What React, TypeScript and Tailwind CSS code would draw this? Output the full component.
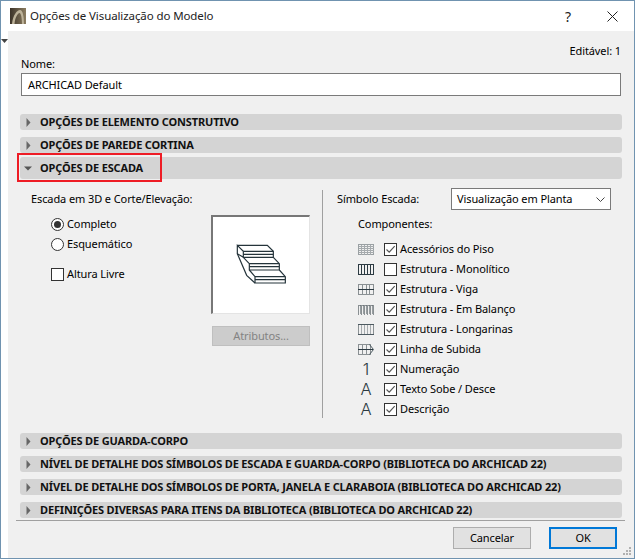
import type { ReactNode } from "react";

const font = "[font-family:'Noto_Sans',sans-serif]";

function Caret({ open = false }: { open?: boolean }) {
  return (
    <span className="flex w-[20px] shrink-0 items-center justify-center pr-[4px]">
      {open ? (
        <svg width="8" height="5" viewBox="0 0 8 5">
          <path d="M0 0.5h8L4 4.5z" fill="#555" />
        </svg>
      ) : (
        <svg width="5" height="9" viewBox="0 0 5 9">
          <path d="M0.5 0v9L4.5 4.5z" fill="#666" />
        </svg>
      )}
    </span>
  );
}

function SectionBar({ label, open = false, className = "" }: { label: string; open?: boolean; className?: string }) {
  return (
    <div
      className={`flex items-center rounded-[3px] bg-[#d4d4d4] text-[11px] leading-none font-bold tracking-[-0.16px] text-[#111] ${
        open ? "h-[22px]" : "h-[16px]"
      } ${className}`}
    >
      <Caret open={open} />
      <span className="-mt-[1px]">{label}</span>
    </div>
  );
}

function Check({ checked = false }: { checked?: boolean }) {
  return (
    <span className="flex h-[13px] w-[13px] shrink-0 items-center justify-center border border-[#333] bg-white">
      {checked && (
        <svg width="11" height="11" viewBox="0 0 11 11">
          <path d="M1.5 5.5L4.2 8.2L9.7 2.2" fill="none" stroke="#555" strokeWidth="1.2" />
        </svg>
      )}
    </span>
  );
}

function Radio({ checked = false }: { checked?: boolean }) {
  return (
    <span className="flex h-[13px] w-[13px] shrink-0 items-center justify-center rounded-full border border-[#333] bg-white">
      {checked && <span className="h-[7px] w-[7px] rounded-full bg-[#333]" />}
    </span>
  );
}

const gray = "#8a9093";
const dark = "#2c3a42";

function Grid({ color, cols, rows = [] as number[] }: { color: string; cols: number[]; rows?: number[] }) {
  return (
    <>
      {cols.map((x) => (
        <path key={`c${x}`} d={`M${x} 0.5V10.5`} stroke={color} />
      ))}
      {rows.map((y) => (
        <path key={`r${y}`} d={`M1 ${y}H16`} stroke={color} />
      ))}
    </>
  );
}

// the numbering and text rows show a sample character as their icon
function GlyphIcon({ char }: { char: string }) {
  return (
    <svg width="16" height="16" viewBox="0 0 16 16" overflow="visible">
      <text x="8" y="14" textAnchor="middle" fontSize="16.5" fontWeight="300" fontFamily="Inter, sans-serif" fill={dark}>
        {char}
      </text>
    </svg>
  );
}

const icons: Record<string, ReactNode> = {
  piso: (
    <svg width="16" height="11" viewBox="0 0 16 11" fill="none" shapeRendering="crispEdges">
      <rect x="0.5" y="0.5" width="15" height="10" stroke="#9aa0a3" />
      <Grid color="#a5aaad" cols={[3.5, 6.5, 9.5, 12.5]} rows={[2.5, 4.5, 6.5, 8.5]} />
    </svg>
  ),
  mono: (
    <svg width="16" height="11" viewBox="0 0 16 11" fill="none" shapeRendering="crispEdges">
      <rect x="0.5" y="0.5" width="15" height="10" stroke={dark} />
      <Grid color={dark} cols={[3.5, 6.5, 9.5, 12.5]} />
    </svg>
  ),
  viga: (
    <svg width="16" height="11" viewBox="0 0 16 11" fill="none" shapeRendering="crispEdges">
      <rect x="0.5" y="0.5" width="15" height="10" stroke={gray} />
      <Grid color={gray} cols={[4.5, 8.5, 11.5]} />
      <path d="M0 5.5H16" stroke={dark} />
    </svg>
  ),
  balanco: (
    <svg width="16" height="11" viewBox="0 0 16 11" fill="none" shapeRendering="crispEdges">
      <path d="M1 1.5H15" stroke={gray} />
      <Grid color={gray} cols={[0.5, 3.5, 6.5, 9.5, 12.5, 15.5]} />
      <path d="M2.5 1V10M5.5 1V10M8.5 1V10M11.5 1V10M14.5 1V10" stroke="#5d676c" strokeWidth="0.6" />
    </svg>
  ),
  longarinas: (
    <svg width="16" height="11" viewBox="0 0 16 11" fill="none" shapeRendering="crispEdges">
      <rect x="0.5" y="0.5" width="15" height="10" stroke={gray} />
      <Grid color="#a5aaad" cols={[3.5, 6.5, 9.5, 12.5]} />
      <path d="M0 0.5H16M0 10.5H16" stroke="#4d5a61" />
    </svg>
  ),
  linha: (
    <svg width="16" height="11" viewBox="0 0 16 11" fill="none">
      <rect x="0.5" y="0.5" width="12" height="10" stroke={gray} shapeRendering="crispEdges" />
      <path d="M4.5 0.5V10.5M8.5 0.5V10.5" stroke={gray} shapeRendering="crispEdges" />
      <path d="M0 5.5H15" stroke={dark} shapeRendering="crispEdges" />
      <path d="M11.5 0.5L15.5 5.5L11.5 10.5" stroke="#4d5a61" />
    </svg>
  ),
  one: <GlyphIcon char="1" />,
  a: <GlyphIcon char="A" />,
};

const components = [
  { label: "Acessórios do Piso", checked: true, icon: icons.piso },
  { label: "Estrutura - Monolítico", checked: false, icon: icons.mono },
  { label: "Estrutura - Viga", checked: true, icon: icons.viga },
  { label: "Estrutura - Em Balanço", checked: true, icon: icons.balanco },
  { label: "Estrutura - Longarinas", checked: true, icon: icons.longarinas },
  { label: "Linha de Subida", checked: true, icon: icons.linha },
  { label: "Numeração", checked: true, icon: icons.one },
  { label: "Texto Sobe / Desce", checked: true, icon: icons.a },
  { label: "Descrição", checked: true, icon: icons.a },
];

function StairPreview() {
  // coordinates are 3x, traced from the dialog's preview
  return (
    <svg width="96" height="96" viewBox="9 15 288 288" fill="none" stroke="#25343b" strokeWidth="3.6">
      <path d="M82 100H172L190 118V136H100V118L82 100V125L100 136" />
      <path d="M100 118H190M100 127H190" />
      <path d="M190 136L208 155V174H118V155L100 136M118 155H208M118 164H208" />
      <path d="M208 174L226 194V213H135V194L118 174M135 194H226M135 203H226" />
      <path d="M82 125L110 190L135 213" />
    </svg>
  );
}

export default function App() {
  return (
    <div className={`relative flex h-[559px] w-[635px] flex-col overflow-hidden border border-[#7093b0] bg-white text-[11px] tracking-[-0.1px] text-black ${font}`}>
      {/* title bar */}
      <div className="flex h-[30px] shrink-0 items-center pl-[9px]">
        <svg width="16" height="16" viewBox="0 0 16 16">
          <defs>
            <linearGradient id="lg" x1="0" y1="0" x2="1" y2="0">
              <stop offset="0" stopColor="#3c3328" />
              <stop offset="1" stopColor="#8b7c60" />
            </linearGradient>
          </defs>
          <rect width="16" height="16" fill="url(#lg)" />
          <path d="M2 16C3 7 7 2 10 2C13 2 14 9 14 16H12C12 10 11 5 9.5 5C8 5 5 9 4.5 16z" fill="#bdb299" />
        </svg>
        <span className="ml-[4px] text-[11.5px] text-[#222]">Opções de Visualização do Modelo</span>
        <span className="ml-auto text-[14px] text-[#222]">?</span>
        <svg className="mr-[16px] ml-[36px]" width="11" height="11" viewBox="0 0 11 11">
          <path d="M0.5 0.5L10.5 10.5M10.5 0.5L0.5 10.5" stroke="#222" />
        </svg>
      </div>

      <div className="flex min-h-0 flex-1">
        {/* collapse strip */}
        <div className="w-[7px] shrink-0 pt-[8px]">
          <svg width="7" height="4" viewBox="0 0 7 4">
            <path d="M0 0H7L3.5 4z" fill="#444" />
          </svg>
        </div>

        <div className="flex min-w-0 flex-1 flex-col bg-[#f0f0f0] px-[12px]">
          <div className="mt-[12px] mb-[1px] flex h-[14px] items-center justify-end pr-[1px] leading-none">Editável: 1</div>
          <div className="h-[11px] pl-[1px] leading-[11px]">Nome:</div>
          <div className="mt-[4px] mr-[1px] ml-[1px] flex h-[23px] items-center border border-[#7a7a7a] bg-white pt-[1px] pl-[6px]">ARCHICAD Default</div>

          <SectionBar className="mt-[18px]" label="OPÇÕES DE ELEMENTO CONSTRUTIVO" />
          <SectionBar className="mt-[7px]" label="OPÇÕES DE PAREDE CORTINA" />
          <SectionBar className="mt-[4px]" open label="OPÇÕES DE ESCADA" />

          {/* stair options */}
          <div className="flex h-[254px] pt-[11px]">
            <div className="h-[228px] w-[303px] shrink-0 border-r border-[#a0a0a0]">
              <div className="flex h-[18px] items-center pl-[11px]">Escada em 3D e Corte/Elevação:</div>
              <div className="mt-[7px] flex">
                <div className="w-[191px] shrink-0 pl-[31px]">
                  <label className="flex h-[18px] items-center gap-[3px]"><Radio checked />Completo</label>
                  <label className="mt-[2px] flex h-[18px] items-center gap-[3px]"><Radio />Esquemático</label>
                  <label className="mt-[12px] flex h-[18px] items-center gap-[3px]"><Check />Altura Livre</label>
                </div>
                <div>
                  <div className="h-[99px] w-[99px] border-t-2 border-r border-b border-l-2 border-t-[#777] border-r-[#e4e4e4] border-b-[#e4e4e4] border-l-[#777] bg-white">
                    <StairPreview />
                  </div>
                  <div className="mt-[12px] ml-[1px] flex h-[20px] w-[98px] items-center justify-center border border-[#bfbfbf] bg-[#cccccc] text-[#838383]">Atributos...</div>
                </div>
              </div>
            </div>

            <div className="min-w-0 flex-1">
              <div className="-mt-[2px] flex h-[22px] items-center pl-[14px]">
                <span className="w-[114px] shrink-0">Símbolo Escada:</span>
                <div className="flex h-[22px] w-[160px] items-center justify-between border border-[#7a7a7a] bg-white pr-[5px] pl-[5px]">
                  <span>Visualização em Planta</span>
                  <svg width="9" height="5" viewBox="0 0 9 5" fill="none">
                    <path d="M0.5 0.5L4.5 4.5L8.5 0.5" stroke="#444" />
                  </svg>
                </div>
              </div>
              <div className="mt-[5px] flex h-[18px] items-center pl-[35px]">Componentes:</div>
              <div className="mt-[6px] pl-[35px]">
                {components.map((c) => (
                  <div key={c.label} className="flex h-[20px] items-center">
                    <span className="flex h-[20px] w-[16px] shrink-0 items-center justify-center">{c.icon}</span>
                    <span className="ml-[10px]"><Check checked={c.checked} /></span>
                    <span className="ml-[3px]">{c.label}</span>
                  </div>
                ))}
              </div>
            </div>
          </div>

          <SectionBar label="OPÇÕES DE GUARDA-CORPO" />
          <SectionBar className="mt-[7px]" label="NÍVEL DE DETALHE DOS SÍMBOLOS DE ESCADA E GUARDA-CORPO (BIBLIOTECA DO ARCHICAD 22)" />
          <SectionBar className="mt-[7px]" label="NÍVEL DE DETALHE DOS SÍMBOLOS DE PORTA, JANELA E CLARABOIA (BIBLIOTECA DO ARCHICAD 22)" />
          <SectionBar className="mt-[7px]" label="DEFINIÇÕES DIVERSAS PARA ITENS DA BIBLIOTECA (BIBLIOTECA DO ARCHICAD 22)" />

          <div className="mt-[2px] -mr-[3px] -ml-[4px] h-px bg-[#a0a0a0]" />

          <div className="mt-[6px] flex justify-end pr-[5px]">
            <div className="flex h-[22px] w-[78px] items-center justify-center border border-[#adadad] bg-[#e1e1e1]">Cancelar</div>
            <div className="ml-[18px] flex h-[22px] w-[68px] items-center justify-center border-2 border-[#0078d7] bg-[#e1e1e1]">OK</div>
          </div>
        </div>
      </div>

      {/* red callout around the open section */}
      <div className="absolute top-[152px] left-[16px] h-[29px] w-[145px] border-2 border-[#ee1c25]" />

      {/* resize grip */}
      <svg className="absolute right-[2px] bottom-[2px]" width="9" height="9" viewBox="0 0 9 9" fill="#b0b0b0">
        <rect x="6" y="0" width="2" height="2" />
        <rect x="3" y="3" width="2" height="2" />
        <rect x="6" y="3" width="2" height="2" />
        <rect x="0" y="6" width="2" height="2" />
        <rect x="3" y="6" width="2" height="2" />
        <rect x="6" y="6" width="2" height="2" />
      </svg>
    </div>
  );
}
